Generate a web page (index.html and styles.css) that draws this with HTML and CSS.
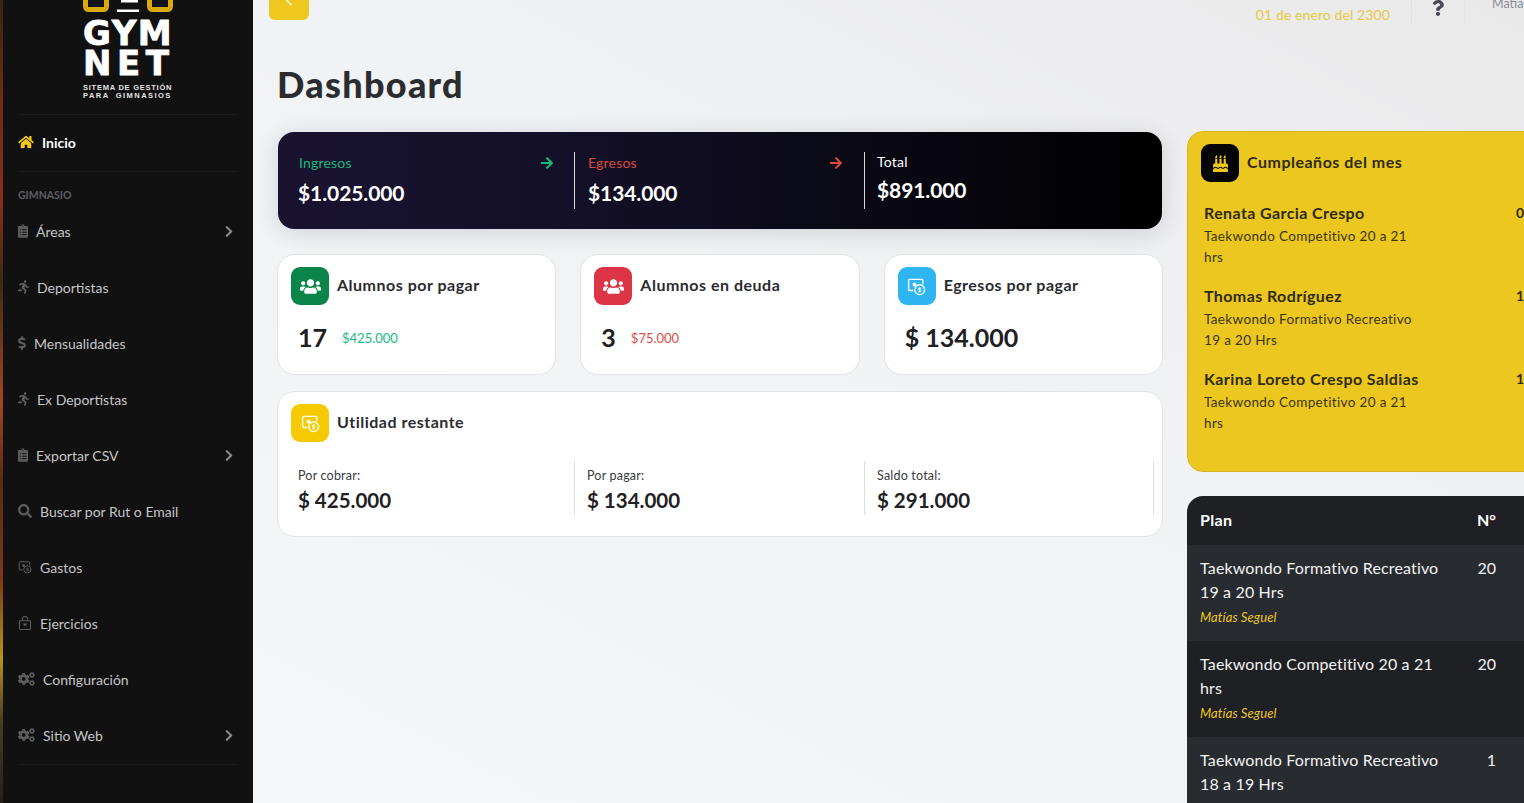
FILE: index.html
```html
<!DOCTYPE html>
<html lang="es">
<head>
    <meta charset="UTF-8">
    <title>Dashboard - Gymnet</title>
    <link rel="stylesheet" href="styles.css">
</head>
<body>
    <svg class="sprite" xmlns="http://www.w3.org/2000/svg">
        <symbol id="i-home" viewBox="0 0 576 512"><path d="M280.37 148.26L96 300.11V464a16 16 0 0 0 16 16l112.06-.29a16 16 0 0 0 15.92-16V368a16 16 0 0 1 16-16h64a16 16 0 0 1 16 16v95.64a16 16 0 0 0 16 16.05L464 480a16 16 0 0 0 16-16V300L295.67 148.26a12.19 12.19 0 0 0-15.3 0zM571.6 251.47L488 182.56V44.05a12 12 0 0 0-12-12h-56a12 12 0 0 0-12 12v72.61L318.47 43a48 48 0 0 0-61 0L4.34 251.47a12 12 0 0 0-1.6 16.9l25.5 31A12 12 0 0 0 45.15 301l235.22-193.74a12.19 12.19 0 0 1 15.3 0L530.9 301a12 12 0 0 0 16.9-1.6l25.5-31a12 12 0 0 0-1.7-16.93z"/></symbol>
        <symbol id="i-clip" viewBox="0 0 384 512"><path d="M336 64h-80c0-35.3-28.7-64-64-64s-64 28.7-64 64H48C21.5 64 0 85.5 0 112v352c0 26.5 21.5 48 48 48h288c26.5 0 48-21.5 48-48V112c0-26.5-21.5-48-48-48zM96 424c-13.3 0-24-10.7-24-24s10.7-24 24-24 24 10.7 24 24-10.7 24-24 24zm0-96c-13.3 0-24-10.7-24-24s10.7-24 24-24 24 10.7 24 24-10.7 24-24 24zm0-96c-13.3 0-24-10.7-24-24s10.7-24 24-24 24 10.7 24 24-10.7 24-24 24zm96-192c13.3 0 24 10.7 24 24s-10.7 24-24 24-24-10.7-24-24 10.7-24 24-24zm128 368c0 4.4-3.6 8-8 8H168c-4.4 0-8-3.6-8-8v-16c0-4.4 3.6-8 8-8h144c4.4 0 8 3.6 8 8v16zm0-96c0 4.4-3.6 8-8 8H168c-4.4 0-8-3.6-8-8v-16c0-4.4 3.6-8 8-8h144c4.4 0 8 3.6 8 8v16zm0-96c0 4.4-3.6 8-8 8H168c-4.4 0-8-3.6-8-8v-16c0-4.4 3.6-8 8-8h144c4.4 0 8 3.6 8 8v16z"/></symbol>
        <symbol id="i-run" viewBox="0 0 416 512"><path d="M272 96c26.51 0 48-21.49 48-48S298.51 0 272 0s-48 21.49-48 48 21.49 48 48 48zM113.69 317.47l-14.8 34.52H32c-17.67 0-32 14.33-32 32s14.33 32 32 32h77.45c19.25 0 36.58-11.44 44.11-29.09l8.79-20.52-10.67-6.3c-17.32-10.23-30.06-25.37-37.99-42.61zM384 223.99h-44.03l-26.06-53.25c-12.5-25.55-35.45-44.23-61.78-50.94l-71.08-21.14c-28.3-6.8-57.77-.55-80.84 17.14l-39.67 30.41c-14.03 10.75-16.69 30.83-5.92 44.86s30.84 16.66 44.86 5.92l39.69-30.41c7.67-5.89 17.44-8 25.27-6.14l14.7 4.37-37.46 87.39c-12.62 29.48-1.31 64.01 26.3 80.31l84.98 50.17-27.47 87.73c-5.28 16.86 4.11 34.81 20.97 40.09 3.19 1 6.41 1.48 9.58 1.48 13.61 0 26.23-8.77 30.52-22.45l31.64-101.06c5.91-20.77-2.89-43.08-21.64-54.39l-61.24-36.14 31.31-78.28 20.27 41.43c8 16.34 24.92 26.89 43.11 26.89H384c17.67 0 32-14.33 32-32s-14.33-31.99-32-31.99z"/></symbol>
        <symbol id="i-dollar" viewBox="0 0 288 512"><path d="M209.2 233.4l-108-31.6C88.7 198.2 80 186.5 80 173.5c0-16.3 13.2-29.5 29.5-29.5h66.3c12.2 0 24.2 3.7 34.2 10.5 6.1 4.1 14.3 3.1 19.5-2l34.8-34c7.1-6.9 6.1-18.4-1.8-24.5C238 74.8 207.4 64.1 176 64V16c0-8.8-7.2-16-16-16h-32c-8.8 0-16 7.2-16 16v48h-2.5C45.8 64-5.4 118.7.5 183.6c4.2 46.1 39.4 83.6 83.8 96.6l102.5 30c12.5 3.7 21.2 15.3 21.2 28.3 0 16.3-13.2 29.5-29.5 29.5h-66.3C100 368 88 364.3 78 357.5c-6.1-4.1-14.3-3.1-19.5 2l-34.8 34c-7.1 6.9-6.1 18.4 1.8 24.5 24.5 19.2 55.1 29.9 86.5 30v48c0 8.8 7.2 16 16 16h32c8.8 0 16-7.2 16-16v-48.2c46.6-.9 90.3-28.6 105.7-72.7 21.5-61.6-14.6-124.8-72.5-141.7z"/></symbol>
        <symbol id="i-search" viewBox="0 0 512 512"><path d="M505 442.7L405.3 343c-4.5-4.5-10.6-7-17-7H372c27.6-35.3 44-79.7 44-128C416 93.1 322.9 0 208 0S0 93.1 0 208s93.1 208 208 208c48.3 0 92.7-16.4 128-44v16.3c0 6.4 2.5 12.5 7 17l99.7 99.7c9.4 9.4 24.6 9.4 33.9 0l28.3-28.3c9.4-9.4 9.4-24.6.1-34zM208 336c-70.7 0-128-57.2-128-128 0-70.7 57.2-128 128-128 70.7 0 128 57.2 128 128 0 70.7-57.2 128-128 128z"/></symbol>
        <symbol id="i-cogs" viewBox="0 0 640 512"><path d="M512.1 191l-8.2 14.3c-3 5.3-9.4 7.5-15.1 5.4-11.8-4.4-22.6-10.7-32.1-18.6-4.6-3.8-5.8-10.5-2.8-15.7l8.2-14.3c-6.9-8-12.3-17.3-15.9-27.4h-16.5c-6 0-11.2-4.3-12.2-10.3-2-12-2.1-24.6 0-37.1 1-6 6.2-10.4 12.2-10.4h16.5c3.6-10.1 9-19.4 15.9-27.4l-8.2-14.3c-3-5.2-1.9-11.9 2.8-15.7 9.5-7.9 20.4-14.2 32.1-18.6 5.7-2.1 12.1.1 15.1 5.4l8.2 14.3c10.5-1.9 21.2-1.9 31.7 0L552 6.3c3-5.3 9.4-7.5 15.1-5.4 11.8 4.4 22.6 10.7 32.1 18.6 4.6 3.8 5.8 10.5 2.8 15.7l-8.2 14.3c6.9 8 12.3 17.3 15.9 27.4h16.5c6 0 11.2 4.3 12.2 10.3 2 12 2.1 24.6 0 37.1-1 6-6.2 10.4-12.2 10.4h-16.5c-3.6 10.1-9 19.4-15.9 27.4l8.2 14.3c3 5.2 1.9 11.9-2.8 15.7-9.5 7.9-20.4 14.2-32.1 18.6-5.7 2.1-12.1-.1-15.1-5.4l-8.2-14.3c-10.4 1.9-21.2 1.9-31.7 0zm-10.5-58.8c38.5 29.6 82.4-14.3 52.8-52.8-38.5-29.7-82.4 14.3-52.8 52.8zM386.3 286.1l33.7 16.8c10.1 5.8 14.5 18.1 10.5 29.1-8.9 24.2-26.4 46.4-42.6 65.8-7.4 8.9-20.2 11.1-30.3 5.3l-29.1-16.8c-16 13.7-34.6 24.6-54.9 31.7v33.6c0 11.6-8.3 21.6-19.7 23.6-24.6 4.2-50.4 4.4-75.9 0-11.5-2-20-11.9-20-23.6V418c-20.3-7.2-38.9-18-54.9-31.7L74 403c-10 5.8-22.9 3.6-30.3-5.3-16.2-19.4-33.3-41.6-42.2-65.7-4-10.9.4-23.2 10.5-29.1l33.3-16.8c-3.9-20.9-3.9-42.4 0-63.4L12 205.8c-10.1-5.8-14.6-18.1-10.5-29 8.9-24.2 26-46.4 42.2-65.8 7.4-8.9 20.2-11.1 30.3-5.3l29.1 16.8c16-13.7 34.6-24.6 54.9-31.7V57.1c0-11.5 8.2-21.5 19.6-23.5 24.6-4.2 50.5-4.4 76-.1 11.5 2 20 11.9 20 23.6v33.6c20.3 7.2 38.9 18 54.9 31.7l29.1-16.8c10-5.8 22.9-3.6 30.3 5.3 16.2 19.4 33.2 41.6 42.1 65.8 4 10.9.1 23.2-10 29.1l-33.7 16.8c3.9 21 3.9 42.5 0 63.5zm-117.6 21.1c59.2-77-28.7-164.9-105.7-105.7-59.2 77 28.7 164.9 105.7 105.7zm243.4 182.7l-8.2 14.3c-3 5.3-9.4 7.5-15.1 5.4-11.8-4.4-22.6-10.7-32.1-18.6-4.6-3.8-5.8-10.5-2.8-15.7l8.2-14.3c-6.9-8-12.3-17.3-15.9-27.4h-16.5c-6 0-11.2-4.3-12.2-10.3-2-12-2.1-24.6 0-37.1 1-6 6.2-10.4 12.2-10.4h16.5c3.6-10.1 9-19.4 15.9-27.4l-8.2-14.3c-3-5.2-1.9-11.9 2.8-15.7 9.5-7.9 20.4-14.2 32.1-18.6 5.7-2.1 12.1.1 15.1 5.4l8.2 14.3c10.5-1.9 21.2-1.9 31.7 0l8.2-14.3c3-5.3 9.4-7.5 15.1-5.4 11.8 4.4 22.6 10.7 32.1 18.6 4.6 3.8 5.8 10.5 2.8 15.7l-8.2 14.3c6.9 8 12.3 17.3 15.9 27.4h16.5c6 0 11.2 4.3 12.2 10.3 2 12 2.1 24.6 0 37.1-1 6-6.2 10.4-12.2 10.4h-16.5c-3.6 10.1-9 19.4-15.9 27.4l8.2 14.3c3 5.2 1.9 11.9-2.8 15.7-9.5 7.9-20.4 14.2-32.1 18.6-5.7 2.1-12.1-.1-15.1-5.4l-8.2-14.3c-10.4 1.9-21.2 1.9-31.7 0zM501.6 431c38.5 29.6 82.4-14.3 52.8-52.8-38.5-29.6-82.4 14.3-52.8 52.8z"/></symbol>
        <symbol id="i-chevron" viewBox="0 0 320 512"><path d="M285.476 272.971L91.132 467.314c-9.373 9.373-24.569 9.373-33.941 0l-22.667-22.667c-9.357-9.357-9.375-24.522-.04-33.901L188.505 256 34.484 101.255c-9.335-9.379-9.317-24.544.04-33.901l22.667-22.667c9.373-9.373 24.569-9.373 33.941 0L285.475 239.03c9.373 9.372 9.373 24.568.001 33.941z"/></symbol>
        <symbol id="i-arrow" viewBox="0 0 448 512"><path d="M190.5 66.9l22.2-22.2c9.4-9.4 24.6-9.4 33.9 0L441 239c9.4 9.4 9.4 24.6 0 33.9L246.6 467.3c-9.4 9.4-24.6 9.4-33.9 0l-22.2-22.2c-9.5-9.5-9.3-25 .4-34.3L311.4 296H24c-13.3 0-24-10.7-24-24v-32c0-13.3 10.7-24 24-24h287.4L190.9 101.2c-9.8-9.3-10-24.8-.4-34.3z"/></symbol>
        <symbol id="i-users" viewBox="0 0 640 512"><path d="M96 224c35.3 0 64-28.7 64-64s-28.7-64-64-64-64 28.7-64 64 28.7 64 64 64zm448 0c35.3 0 64-28.7 64-64s-28.7-64-64-64-64 28.7-64 64 28.7 64 64 64zm32 32h-64c-17.6 0-33.5 7.1-45.1 18.6 40.3 22.1 68.9 62 75.1 109.4h66c17.7 0 32-14.3 32-32v-32c0-35.3-28.7-64-64-64zm-256 0c61.9 0 112-50.1 112-112S381.9 32 320 32 208 82.1 208 144s50.1 112 112 112zm76.8 32h-8.3c-20.8 10-43.9 16-68.5 16s-47.6-6-68.5-16h-8.3C179.6 288 128 339.6 128 403.2V432c0 26.5 21.5 48 48 48h288c26.5 0 48-21.5 48-48v-28.8c0-63.6-51.6-115.2-115.2-115.2zm-223.7-13.4C161.5 263.1 145.6 256 128 256H64c-35.3 0-64 28.7-64 64v32c0 17.7 14.3 32 32 32h65.9c6.3-47.4 34.9-87.3 75.2-109.4z"/></symbol>
        <symbol id="i-cake" viewBox="0 0 448 512"><path d="M448 384c-28.02 0-31.26-32-74.5-32-43.43 0-46.825 32-74.75 32-27.695 0-31.454-32-74.75-32-42.842 0-47.218 32-74.5 32-28.148 0-31.202-32-74.75-32-43.547 0-46.653 32-74.75 32v-80c0-26.5 21.5-48 48-48h16V112h64v144h64V112h64v144h64V112h64v144h16c26.5 0 48 21.5 48 48v80zm0 128H0v-96c43.356 0 46.767-32 74.75-32 27.951 0 31.253 32 74.75 32 42.843 0 47.217-32 74.5-32 28.148 0 31.201 32 74.75 32 43.357 0 46.767-32 74.75-32 27.488 0 31.252 32 74.5 32v96zM96 96c-17.75 0-32-14.25-32-32 0-31 32-23 32-64 12 0 32 29.5 32 56s-14.25 40-32 40zm128 0c-17.75 0-32-14.25-32-32 0-31 32-23 32-64 12 0 32 29.5 32 56s-14.25 40-32 40zm128 0c-17.75 0-32-14.25-32-32 0-31 32-23 32-64 12 0 32 29.5 32 56s-14.25 40-32 40z"/></symbol>
        <symbol id="i-question" viewBox="0 0 384 512"><path d="M202.021 0C122.202 0 70.503 32.703 29.914 91.026c-7.363 10.58-5.093 25.086 5.178 32.874l43.138 32.709c10.373 7.865 25.132 6.026 33.253-4.148 25.049-31.381 43.63-49.449 82.757-49.449 30.764 0 68.816 19.799 68.816 49.631 0 22.552-18.617 34.134-48.993 51.164-35.423 19.86-82.299 44.576-82.299 106.405V320c0 13.255 10.745 24 24 24h72.471c13.255 0 24-10.745 24-24v-5.773c0-42.86 125.268-44.645 125.268-160.627C377.504 66.256 286.902 0 202.021 0zM192 373.459c-38.196 0-69.271 31.075-69.271 69.271 0 38.195 31.075 69.27 69.271 69.27s69.271-31.075 69.271-69.271-31.075-69.27-69.271-69.27z"/></symbol>
        <symbol id="i-money" viewBox="0 0 24 24">
            <path d="M8 17H3.5A1.5 1.5 0 0 1 2 15.500V4.500A1.500 1.500 0 0 1 3.500 3h15A1.500 1.500 0 0 1 20 4.500V9" fill="none" stroke="currentColor" stroke-width="1.700"/>
            <circle cx="9.500" cy="9.500" r="2.400" fill="currentColor"/>
            <circle cx="16" cy="16" r="6.200" fill="none" stroke="currentColor" stroke-width="1.700"/>
            <path d="M18 14.200h-2.800a1.100 1.100 0 0 0 0 2.200h1.600a1.100 1.100 0 0 1 0 2.200H14M16 13v6" fill="none" stroke="currentColor" stroke-width="1.100"/>
        </symbol>
        <symbol id="i-bag" viewBox="0 0 24 24">
            <rect x="2.500" y="8" width="19" height="15" rx="1.500" fill="none" stroke="currentColor" stroke-width="1.800"/>
            <path d="M7.500 8V5.500a4.500 4.500 0 0 1 9 0V8" fill="none" stroke="currentColor" stroke-width="1.800"/>
            <path d="M8 13h8l-4 5z" fill="currentColor"/>
        </symbol>
    </svg>

    <div class="desktop-strip"></div>

    <aside class="sidebar">
        <div class="logo">
            <svg class="logo-top" width="90" height="12" viewBox="0 0 90 12">
                <path d="M2.500-6V6.500a3 3 0 0 0 3 3h15a3 3 0 0 0 3-3V-6M66.500-6V6.500a3 3 0 0 0 3 3h15a3 3 0 0 0 3-3V-6" fill="none" stroke="#d6a90f" stroke-width="5"/>
                <path d="M38 0h17v2.500H38zM34 9.500h22V12H34z" fill="#fff"/>
            </svg>
            <div class="logo-word">GYM<br><span class="logo-word-net">NET</span></div>
            <div class="logo-caption">SITEMA DE GESTIÓN<br><span class="logo-caption-low">PARA GIMNASIOS</span></div>
        </div>

        <a class="nav-item nav-active">
            <svg class="nav-icon" width="16" height="14"><use href="#i-home"/></svg>
            <span>Inicio</span>
        </a>
        <div class="nav-heading">GIMNASIO</div>

        <a class="nav-item">
            <svg class="nav-icon" width="10" height="14"><use href="#i-clip"/></svg>
            <span>Áreas</span>
            <svg class="nav-chevron" width="8" height="13"><use href="#i-chevron"/></svg>
        </a>
        <a class="nav-item">
            <svg class="nav-icon" width="11" height="14"><use href="#i-run"/></svg>
            <span>Deportistas</span>
        </a>
        <a class="nav-item">
            <svg class="nav-icon" width="8" height="14"><use href="#i-dollar"/></svg>
            <span>Mensualidades</span>
        </a>
        <a class="nav-item">
            <svg class="nav-icon" width="11" height="14"><use href="#i-run"/></svg>
            <span>Ex Deportistas</span>
        </a>
        <a class="nav-item">
            <svg class="nav-icon" width="10" height="14"><use href="#i-clip"/></svg>
            <span>Exportar CSV</span>
            <svg class="nav-chevron" width="8" height="13"><use href="#i-chevron"/></svg>
        </a>
        <a class="nav-item">
            <svg class="nav-icon" width="14" height="14"><use href="#i-search"/></svg>
            <span>Buscar por Rut o Email</span>
        </a>
        <a class="nav-item">
            <svg class="nav-icon" width="14" height="14"><use href="#i-money"/></svg>
            <span>Gastos</span>
        </a>
        <a class="nav-item">
            <svg class="nav-icon" width="14" height="14"><use href="#i-bag"/></svg>
            <span>Ejercicios</span>
        </a>
        <a class="nav-item">
            <svg class="nav-icon" width="17" height="14"><use href="#i-cogs"/></svg>
            <span>Configuración</span>
        </a>
        <a class="nav-item nav-last">
            <svg class="nav-icon" width="17" height="14"><use href="#i-cogs"/></svg>
            <span>Sitio Web</span>
            <svg class="nav-chevron" width="8" height="13"><use href="#i-chevron"/></svg>
        </a>
    </aside>

    <main class="main">
        <header class="topbar">
            <button class="back-button" type="button">
                <svg class="back-icon" width="8" height="13"><use href="#i-chevron"/></svg>
            </button>
            <div class="topbar-date">01 de enero del 2300</div>
            <div class="topbar-help">
                <svg width="12" height="16"><use href="#i-question"/></svg>
            </div>
            <div class="topbar-user">Matías Seguel</div>
        </header>

        <h1 class="page-title">Dashboard</h1>

        <div class="dashboard">
            <div class="left-column">
                <section class="balance">
                    <div class="balance-col balance-first">
                        <div class="balance-label label-green">
                            Ingresos
                            <svg width="12" height="14"><use href="#i-arrow"/></svg>
                        </div>
                        <div class="balance-value">$1.025.000</div>
                    </div>
                    <div class="balance-col">
                        <div class="balance-label label-red">
                            Egresos
                            <svg width="12" height="14"><use href="#i-arrow"/></svg>
                        </div>
                        <div class="balance-value">$134.000</div>
                    </div>
                    <div class="balance-col balance-total">
                        <div class="balance-label">Total</div>
                        <div class="balance-value">$891.000</div>
                    </div>
                </section>

                <div class="stat-grid">
                    <section class="card">
                        <div class="card-head">
                            <span class="icon-box icon-green"><svg width="21" height="17"><use href="#i-users"/></svg></span>
                            <h2>Alumnos por pagar</h2>
                        </div>
                        <div class="stat-body">
                            <strong class="stat-number">17</strong>
                            <span class="stat-money money-green">$425.000</span>
                        </div>
                    </section>
                    <section class="card">
                        <div class="card-head">
                            <span class="icon-box icon-red"><svg width="21" height="17"><use href="#i-users"/></svg></span>
                            <h2>Alumnos en deuda</h2>
                        </div>
                        <div class="stat-body">
                            <strong class="stat-number">3</strong>
                            <span class="stat-money money-red">$75.000</span>
                        </div>
                    </section>
                    <section class="card">
                        <div class="card-head">
                            <span class="icon-box icon-blue"><svg width="19" height="19"><use href="#i-money"/></svg></span>
                            <h2>Egresos por pagar</h2>
                        </div>
                        <div class="stat-body">
                            <strong class="stat-number">$ 134.000</strong>
                        </div>
                    </section>
                </div>

                <section class="card card-wide">
                    <div class="card-head">
                        <span class="icon-box icon-yellow"><svg width="19" height="19"><use href="#i-money"/></svg></span>
                        <h2>Utilidad restante</h2>
                    </div>
                    <div class="summary">
                        <div class="summary-col">
                            <div class="summary-label">Por cobrar:</div>
                            <strong class="summary-value">$ 425.000</strong>
                        </div>
                        <div class="summary-col">
                            <div class="summary-label">Por pagar:</div>
                            <strong class="summary-value">$ 134.000</strong>
                        </div>
                        <div class="summary-col">
                            <div class="summary-label">Saldo total:</div>
                            <strong class="summary-value">$ 291.000</strong>
                        </div>
                    </div>
                </section>
            </div>

            <div class="right-column">
                <section class="birthdays">
                    <div class="card-head">
                        <span class="icon-box icon-black"><svg width="15" height="17"><use href="#i-cake"/></svg></span>
                        <h2>Cumpleaños del mes</h2>
                    </div>
                    <div class="birthday-row">
                        <div class="birthday-info">
                            <div class="birthday-name">Renata Garcia Crespo</div>
                            <div class="birthday-plan">Taekwondo Competitivo 20 a 21<br>hrs</div>
                        </div>
                        <strong class="birthday-day">01</strong>
                    </div>
                    <div class="birthday-row">
                        <div class="birthday-info">
                            <div class="birthday-name">Thomas Rodríguez</div>
                            <div class="birthday-plan">Taekwondo Formativo Recreativo<br>19 a 20 Hrs</div>
                        </div>
                        <strong class="birthday-day">12</strong>
                    </div>
                    <div class="birthday-row">
                        <div class="birthday-info">
                            <div class="birthday-name">Karina Loreto Crespo Saldias</div>
                            <div class="birthday-plan">Taekwondo Competitivo 20 a 21<br>hrs</div>
                        </div>
                        <strong class="birthday-day">18</strong>
                    </div>
                </section>

                <div class="plans">
                    <table class="plans-table">
                        <thead>
                            <tr>
                                <th class="plan-name">Plan</th>
                                <th class="plan-count">N°</th>
                                <th></th>
                            </tr>
                        </thead>
                        <tbody>
                            <tr>
                                <td class="plan-name">Taekwondo Formativo Recreativo<br>19 a 20 Hrs<em>Matías Seguel</em></td>
                                <td class="plan-count">20</td>
                                <td></td>
                            </tr>
                            <tr>
                                <td class="plan-name">Taekwondo Competitivo 20 a 21<br>hrs<em>Matías Seguel</em></td>
                                <td class="plan-count">20</td>
                                <td></td>
                            </tr>
                            <tr>
                                <td class="plan-name">Taekwondo Formativo Recreativo<br>18 a 19 Hrs<em>Matías Seguel</em></td>
                                <td class="plan-count">1</td>
                                <td></td>
                            </tr>
                        </tbody>
                    </table>
                </div>
            </div>
        </div>
    </main>
</body>
</html>
```

FILE: styles.css
```css
* {
    box-sizing: border-box;
}

html,
body {
    height: 803px;
    overflow: hidden;
}

body {
    margin: 0;
    display: flex;
    font-family: "Lato", "Noto Sans", sans-serif;
    color: #2b2c30;
    background: linear-gradient(to bottom left, #e9e9ea 0%, #f1f2f4 40%, #f6f7f9 100%);
}

.sprite {
    display: none;
}

svg {
    fill: currentColor;
    flex-shrink: 0;
}

/* sliver of the desktop behind the window */
.desktop-strip {
    width: 3px;
    flex-shrink: 0;
    background: linear-gradient(180deg, #3a2410 0%, #6d2d12 12%, #8a2f14 25%, #3f2a14 35%, #a3471a 50%, #5c2a12 60%, #7a3a14 72%, #b9921c 82%, #4a3a20 90%, #2a1e14 100%);
}

/* sidebar */
.sidebar {
    width: 250px;
    flex-shrink: 0;
    background-color: #111112;
    padding: 0 15px;
}

.logo {
    height: 115px;
    display: flex;
    flex-direction: column;
    align-items: center;
    border-bottom: 1px solid #1b1b1c;
    color: #fff;
}

.logo-top {
    display: block;
}

.logo-word {
    width: 90px;
    margin-top: 6px;
    font-family: "DejaVu Sans", sans-serif;
    font-weight: 700;
    font-size: 34px;
    line-height: 30px;
    letter-spacing: 1.500px;
    -webkit-text-stroke: 0.800px #fff;
    white-space: nowrap;
}

.logo-word-net {
    letter-spacing: 5.500px;
}

.logo-caption {
    margin-top: 6px;
    width: 90px;
    font-family: "Liberation Sans", sans-serif;
    font-weight: 700;
    font-size: 7.500px;
    line-height: 8px;
    letter-spacing: 0.750px;
    white-space: nowrap;
    color: #e4e4e4;
}

.logo-caption-low {
    letter-spacing: 1.450px;
    word-spacing: 3px;
}

.nav-item {
    height: 56px;
    padding-bottom: 2px;
    display: flex;
    align-items: center;
    gap: 8px;
    color: #c6c6c7;
    font-size: 14px;
}

.nav-icon {
    color: #5d5d5f;
}

.nav-chevron {
    margin-left: auto;
    margin-right: 5px;
    color: #8b8b8c;
}

.nav-active {
    color: #fff;
    font-weight: 700;
    border-bottom: 1px solid #1b1b1c;
    height: 57px;
}

.nav-active .nav-icon {
    color: #f2c81f;
}

.nav-heading {
    height: 32px;
    padding-top: 17px;
    font-size: 10.500px;
    line-height: 12px;
    font-weight: 700;
    color: #5f5f60;
}

.nav-last {
    height: 57px;
    border-bottom: 1px solid #1b1b1c;
}

/* main area */
.main {
    width: 1320px;
    flex-shrink: 0;
}

.topbar {
    height: 24px;
    overflow: hidden;
    display: flex;
    align-items: flex-end;
    padding-left: 16px;
}

.back-button {
    width: 40px;
    height: 40px;
    margin-bottom: 4px;
    padding: 0;
    border: none;
    border-radius: 6px;
    background-color: #eec71f;
    color: #f8eaa8;
    cursor: pointer;
}

.back-icon {
    transform: scaleX(-1);
    display: block;
    margin: 0 auto;
}

.topbar-date {
    margin-left: auto;
    padding-right: 21px;
    font-size: 14px;
    line-height: 24px;
    height: 21px;
    letter-spacing: 0.100px;
    color: #e7c93f;
    white-space: nowrap;
}

.topbar-help {
    width: 54px;
    height: 24px;
    border-left: 1px solid #e1e2e4;
    border-right: 1px solid #e1e2e4;
    display: flex;
    justify-content: center;
    color: #4a4a55;
}

.topbar-user {
    width: 108px;
    align-self: flex-start;
    padding-left: 27px;
    font-size: 12.500px;
    line-height: 14px;
    margin-top: -3px;
    color: #8b8c96;
    white-space: nowrap;
}

.page-title {
    margin: 36px 0 23px 24px;
    font-size: 36px;
    line-height: 48px;
    font-weight: 900;
    letter-spacing: 1.300px;
    color: #2b2c30;
}

.dashboard {
    display: grid;
    grid-template-columns: 886px 360px;
    gap: 24px;
    padding-left: 24px;
}

.left-column {
    margin-top: 1px;
}

/* dark balance band */
.balance {
    height: 97px;
    margin-left: 1px;
    margin-right: 1px;
    display: flex;
    padding: 20px 0 20px 20px;
    border-radius: 16px;
    background: linear-gradient(90deg, #19132f 0%, #14102a 30%, #0b0a17 62%, #000 100%);
    box-shadow: 0 4px 24px rgba(20, 20, 40, 0.14);
    color: #fff;
}

.balance-col {
    width: 290px;
    padding: 0 22px 0 13px;
    border-left: 1px solid #d8d8dc;
}

.balance-first {
    width: 276px;
    padding: 0 21px 0 0;
    border-left: none;
}

.balance-label {
    display: flex;
    justify-content: space-between;
    align-items: center;
    font-size: 14px;
    line-height: 22px;
    letter-spacing: 0.200px;
}

.balance-first .balance-label {
    padding-left: 1px;
}

.label-green {
    color: #14b87c;
}

.label-red {
    color: #d94a3d;
}

.balance-value {
    margin-top: 4px;
    font-size: 21px;
    line-height: 30px;
    font-weight: 700;
    letter-spacing: -0.100px;
}

.balance-total {
    padding-left: 12px;
}

.balance-total .balance-label {
    line-height: 20px;
}

.balance-total .balance-value {
    margin-top: 3px;
}

/* white cards */
.stat-grid {
    display: grid;
    grid-template-columns: repeat(3, 1fr);
    gap: 24px;
    margin-top: 25px;
}

.card {
    height: 121px;
    padding: 12px 13px;
    background-color: #fff;
    border: 1px solid #e0e3e7;
    border-radius: 18px;
}

.card-wide {
    height: 146px;
    margin-top: 16px;
}

.card-head {
    display: flex;
    align-items: center;
    gap: 8px;
}

.card-head h2 {
    margin: 0 0 2px;
    font-size: 16px;
    line-height: 24px;
    font-weight: 700;
    letter-spacing: 0.500px;
    color: #2b2c30;
}

.icon-box {
    width: 38px;
    height: 38px;
    display: flex;
    align-items: center;
    justify-content: center;
    border-radius: 9px;
    color: #fff;
}

.icon-green { background-color: #0a8449; }
.icon-red { background-color: #dc3545; }
.icon-blue { background-color: #2fb6f2; }
.icon-yellow { background-color: #f5ca03; }
.icon-black { background-color: #050505; color: #eec71f; }

.stat-body {
    display: flex;
    align-items: center;
    gap: 15px;
    margin-top: 16px;
    padding-left: 7px;
}

.stat-number {
    font-size: 25px;
    line-height: 32px;
    font-weight: 700;
    color: #1f2023;
}

.stat-money {
    padding-top: 2px;
    font-size: 13px;
}

.money-green { color: #18b981; }
.money-red { color: #dd4f48; }

.summary {
    display: flex;
    margin-top: 19px;
    padding-left: 7px;
}

.summary-col {
    flex: none;
    width: 290px;
    height: 54px;
    padding: 7px 0 0 12px;
    border-left: 1px solid #dcdee1;
}

.summary-col:first-child {
    width: 276px;
    padding-left: 0;
    border-left: none;
}

.summary-col:last-child {
    border-right: 1px solid #dcdee1;
}

.summary-label {
    font-size: 12.500px;
    line-height: 16px;
    letter-spacing: 0.200px;
    color: #3a3b3f;
}

.summary-value {
    display: block;
    margin-top: 2px;
    font-size: 20.500px;
    line-height: 28px;
    color: #1f2023;
}

/* right column */
.birthdays {
    height: 341px;
    padding: 12px 13px;
    background-color: #ebc71f;
    border: 1px solid #d6b520;
    border-radius: 16px;
    color: #3b3415;
}

.birthdays .card-head h2 {
    color: #2f2b12;
}

.birthday-row {
    display: flex;
    padding-left: 3px;
    height: 83px;
}

.card-head + .birthday-row {
    margin-top: 19px;
}

.birthday-info {
    width: 312px;
}

.birthday-name {
    margin-bottom: 1px;
    font-size: 16px;
    line-height: 24px;
    font-weight: 700;
    letter-spacing: 0.400px;
    color: #302b10;
}

.birthday-plan {
    font-size: 13.500px;
    line-height: 21px;
    letter-spacing: 0.350px;
}

.birthday-day {
    font-size: 14px;
    line-height: 24px;
    color: #302b10;
}

.plans {
    margin-top: 24px;
    border-radius: 16px;
    overflow: hidden;
    background-color: #1f2024;
}

.plans-table {
    width: 100%;
    border-collapse: collapse;
    table-layout: fixed;
    color: #f2f2f3;
    font-size: 16px;
}

.plans-table th {
    height: 49px;
    padding: 0 0 2px;
    text-align: left;
    font-weight: 700;
    letter-spacing: 0.300px;
    color: #fff;
}

.plans-table td {
    height: 96px;
    padding: 11px 0 0;
    vertical-align: top;
    line-height: 24px;
    letter-spacing: 0.150px;
}

.plans-table tbody tr:nth-child(odd) {
    background-color: #282b30;
}

.plan-name {
    width: 275px;
    padding-left: 13px !important;
}

.plans-table .plan-count {
    width: 34px;
    text-align: right;
    letter-spacing: 0;
}

.plan-name em {
    display: block;
    margin-top: 4px;
    font-size: 13px;
    line-height: 18px;
    letter-spacing: 0.100px;
    color: #eec71f;
}
```
